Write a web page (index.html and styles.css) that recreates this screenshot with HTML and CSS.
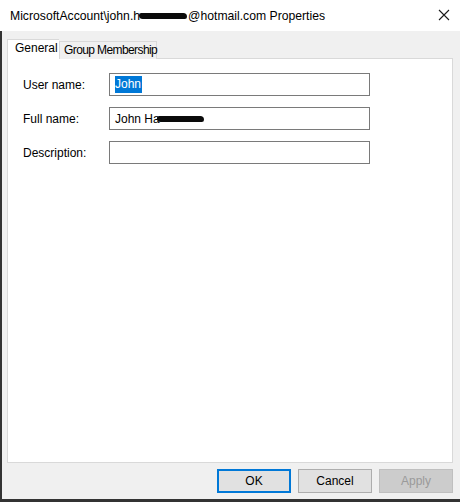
FILE: index.html
```html
<!DOCTYPE html>
<html>
<head>
<meta charset="utf-8">
<link rel="stylesheet" href="styles.css">
</head>
<body>
<div class="window">
  <div class="titlebar">
    <span class="title">MicrosoftAccount\john.h<span class="redact redact-title"></span>@hotmail.com Properties</span>
    <svg class="close" width="12" height="12" viewBox="0 0 12 12"><path d="M1 1 L11 11 M11 1 L1 11" stroke="#1a1a1a" stroke-width="1.1" fill="none"/></svg>
  </div>
  <div class="client">
    <div class="tabs">
      <div class="tab active">General</div>
      <div class="tab">Group Membership</div>
    </div>
    <div class="panel">
      <div class="row">
        <label class="label">User name:</label>
        <div class="field"><span class="selected">John</span></div>
      </div>
      <div class="row">
        <label class="label">Full name:</label>
        <div class="field">John Ha<span class="redact redact-field"></span></div>
      </div>
      <div class="row">
        <label class="label">Description:</label>
        <div class="field"></div>
      </div>
    </div>
    <div class="buttons">
      <div class="btn default">OK</div>
      <div class="btn">Cancel</div>
      <div class="btn disabled">Apply</div>
    </div>
  </div>
</div>
</body>
</html>
```
FILE: styles.css
```css
* { box-sizing: border-box; }
html, body { margin: 0; padding: 0; }
body {
  width: 460px;
  height: 502px;
  font-family: "Liberation Sans", Arial, sans-serif;
  font-size: 12px;
  color: #000;
  background: #f0f0f0;
  overflow: hidden;
}
.window {
  width: 460px;
  height: 502px;
  display: flex;
  flex-direction: column;
}
.titlebar {
  height: 31px;
  background: #fff;
  display: flex;
  align-items: center;
  justify-content: space-between;
  padding: 0 10px 0 10px;
  font-size: 12.2px;
}
.title { white-space: nowrap; }
.close { margin-top: -1px; }
.redact {
  display: inline-block;
  background: #0a0a0a;
  border-radius: 3px 5px 3px 5px;
  vertical-align: middle;
}
.redact-title { width: 48px; height: 6px; margin-left: -1px; margin-right: 1px; }
.redact-field { width: 47px; height: 6px; margin-left: -3px; }
.client {
  flex: 1;
  background: #f0f0f0;
  border-left: 2px solid #333;
  border-bottom: 3px solid #333;
  padding: 8px 7px 0 5px;
  display: flex;
  flex-direction: column;
}
.tabs {
  display: flex;
  align-items: flex-end;
  height: 20px;
  margin-bottom: -1px;
  position: relative;
  z-index: 1;
}
.tab {
  height: 18px;
  border: 1px solid #d9d9d9;
  border-bottom: none;
  background: #f0f0f0;
  white-space: nowrap;
}
.tab.active {
  width: 52px;
  height: 20px;
  background: #fff;
  padding: 0 0 0 7px;
  line-height: 16px;
  border-right: none;
}
.tab:not(.active) {
  width: 98px;
  padding: 0 0 0 4px;
  line-height: 17px;
  letter-spacing: -0.6px;
}
.panel {
  height: 405px;
  background: #fff;
  border: 1px solid #d9d9d9;
  padding: 14px 15px 0 15px;
  display: flex;
  flex-direction: column;
  gap: 11px;
}
.row {
  display: flex;
  align-items: center;
  height: 23px;
}
.label { width: 86px; }
.field {
  width: 261px;
  height: 23px;
  border: 1px solid #7a7a7a;
  padding: 0 4px 0 5px;
  display: flex;
  align-items: center;
  white-space: nowrap;
}
.selected {
  background: #0078d7;
  color: #fff;
  line-height: 17px;
  padding: 0 1px 0 0;
}
.buttons {
  display: flex;
  justify-content: flex-end;
  gap: 7px;
  margin-top: 6px;
}
.btn {
  width: 74px;
  height: 24px;
  background: #e1e1e1;
  border: 1px solid #adadad;
  display: flex;
  align-items: center;
  justify-content: center;
}
.btn.default { border: 2px solid #0078d7; }
.btn.disabled {
  background: #cccccc;
  border-color: #bfbfbf;
  color: #9a9a9a;
}
```
